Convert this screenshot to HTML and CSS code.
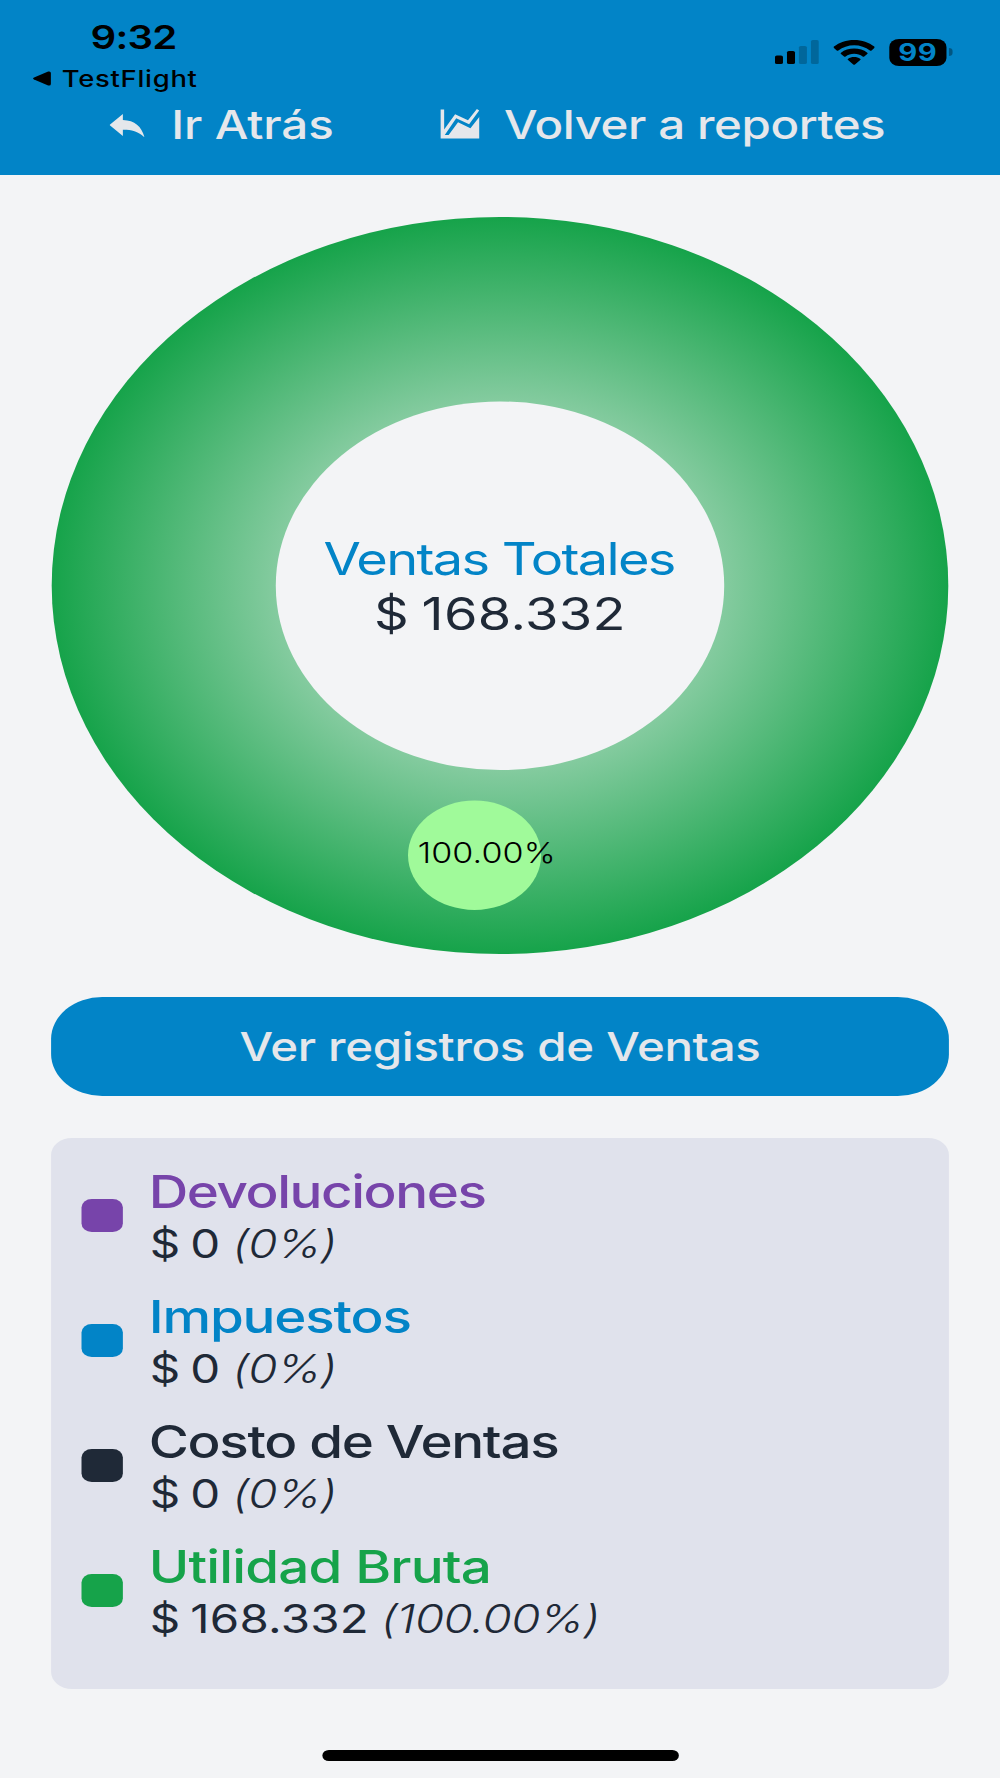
FILE: index.html
```html
<!DOCTYPE html>
<html lang="es">
<head>
    <meta charset="UTF-8">
    <meta name="viewport" content="width=device-width, initial-scale=1.0">
    <title>Ventas Totales</title>
    <link rel="stylesheet" href="styles.css">
</head>
<body>
    <div class="screen">
        <header class="header">
            <div class="status-bar">
                <div class="status-left">
                    <div class="time">9:32</div>
                    <div class="back-app">
                        <svg width="15" height="15" viewBox="0 0 15 15">
                            <path d="M1 6.5 L12.6 .6 Q14.8 0 14.8 2 V13 Q14.8 15 12.6 14.4 L1 8.5 Q-.6 7.5 1 6.5Z"/>
                        </svg>
                        <span>TestFlight</span>
                    </div>
                </div>
                <div class="status-right">
                    <svg width="36.2" height="24" viewBox="0 0 36.2 24">
                        <rect x="0" y="15.5" width="6.6" height="8.5" rx="1.6"/>
                        <rect x="9.9" y="11" width="6.6" height="13" rx="1.6"/>
                        <rect x="19.7" y="6" width="6.6" height="18" rx="1.6" opacity=".22"/>
                        <rect x="29.6" y="0" width="6.6" height="24" rx="1.6" opacity=".22"/>
                    </svg>
                    <svg class="wifi" width="34.2" height="25" viewBox="0 0 34.2 25">
                        <path d="M17.1 0 C23.6 0 29.3 2.5 33.7 6.6 Q34.4 7.3 33.7 8 L31.4 10.4 Q30.8 11 30.1 10.4 C26.5 7.2 22 5.2 17.1 5.2 S7.7 7.2 4.1 10.4 Q3.4 11 2.8 10.4 L.5 8 Q-.2 7.3 .5 6.6 C4.9 2.5 10.6 0 17.1 0Z"/>
                        <path d="M17.1 8.6 C21.2 8.6 25 10.1 27.9 12.7 Q28.6 13.4 27.9 14.1 L25.4 16.5 Q24.8 17.1 24.1 16.5 C22.2 14.8 19.8 13.8 17.1 13.8 S12 14.8 10.1 16.5 Q9.4 17.1 8.8 16.5 L6.3 14.1 Q5.6 13.4 6.3 12.7 C9.2 10.1 13 8.6 17.1 8.6Z"/>
                        <path d="M17.1 17.1 C19 17.1 20.8 17.8 22 18.8 Q22.8 19.4 22.1 20.1 L17.8 24.5 Q17.1 25.2 16.4 24.5 L12.1 20.1 Q11.4 19.4 12.2 18.8 C13.4 17.8 15.2 17.1 17.1 17.1Z"/>
                    </svg>
                    <div class="battery">99</div>
                    <div class="battery-tip"></div>
                </div>
            </div>
            <nav class="nav">
                <a class="nav-link">
                    <svg class="icon-back" width="28.8" height="23.4" viewBox="0 0 28.8 23.4">
                        <path d="M0 11 L11 0 V5.9 C21 6.2 26.4 12.5 28.8 23.4 C23.5 17.6 18 15.7 11 15.8 V22 Z"/>
                    </svg>
                    <span class="go-back">Ir Atrás</span>
                </a>
                <a class="nav-link">
                    <svg class="icon-chart" width="32.6" height="29.4" viewBox="0 0 32.6 29.4">
                        <path d="M0 .6 H3.1 V20.6 L12.1 5.2 L22.7 11.3 L30 0 L31.9 1.5 L23.6 15.3 L13 9.2 L3.6 26 H6.8 L14.5 13.2 L24.7 19.2 L32.3 7.5 V29.4 H0Z"/>
                    </svg>
                    <span class="reports">Volver a reportes</span>
                </a>
            </nav>
        </header>

        <main class="content">
            <svg class="chart" width="738" height="737" viewBox="0 0 738 737">
                <defs>
                    <radialGradient id="ring" gradientUnits="userSpaceOnUse" cx="369" cy="368.5" r="368.5">
                        <stop offset="50%" stop-color="#84cb9f"/>
                        <stop offset="100%" stop-color="#16a34a"/>
                    </radialGradient>
                </defs>
                <circle cx="369" cy="368.5" r="368.5" fill="url(#ring)"/>
                <circle class="hole" cx="369" cy="368.8" r="184.3"/>
                <text class="total-title" x="368.2" y="358">Ventas Totales</text>
                <text class="total-value" x="369" y="413">$ 168.332</text>
                <circle class="bubble" cx="348.1" cy="638.3" r="54.7"/>
                <text class="percent" x="301.3" y="645.8">100.00%</text>
            </svg>

            <button class="btn">Ver registros de Ventas</button>

            <section class="legend">
                <div class="legend-item returns">
                    <span class="swatch"></span>
                    <div>
                        <div class="legend-title">Devoluciones</div>
                        <div class="legend-value"><span>$ 0</span><em>(0%)</em></div>
                    </div>
                </div>
                <div class="legend-item taxes">
                    <span class="swatch"></span>
                    <div>
                        <div class="legend-title">Impuestos</div>
                        <div class="legend-value"><span>$ 0</span><em>(0%)</em></div>
                    </div>
                </div>
                <div class="legend-item cost">
                    <span class="swatch"></span>
                    <div>
                        <div class="legend-title">Costo de Ventas</div>
                        <div class="legend-value"><span>$ 0</span><em>(0%)</em></div>
                    </div>
                </div>
                <div class="legend-item profit">
                    <span class="swatch"></span>
                    <div>
                        <div class="legend-title">Utilidad Bruta</div>
                        <div class="legend-value"><span>$ 168.332</span><em>(100.00%)</em></div>
                    </div>
                </div>
            </section>
        </main>

        <div class="home-indicator"></div>
    </div>
</body>
</html>
```

FILE: styles.css
```css
:root {
    --blue: #0284c7;
    --green: #16a34a;
    --purple: #7744aa;
    --dark: #1f2937;
    --background: #f3f4f6;
    --light-text: #e5e7eb;
}

* {
    box-sizing: border-box;
}

body {
    margin: 0;
    overflow: hidden;
    background-color: var(--background);
    color: var(--dark);
    font-family: Inter, "Liberation Sans", sans-serif;
}

/* 822px wide phone layout, widened to fill the window */
.screen {
    width: 822px;
    height: 1778px;
    transform: scaleX(1.21655);
    transform-origin: 0 0;
}

svg {
    display: block;
    flex: none;
}

.header {
    height: 174.7px;
    background-color: var(--blue);
}

.status-bar {
    display: flex;
    justify-content: space-between;
    height: 93px;
    padding: 17px 38.7px 0 27px;
    color: #000;
}

.time {
    padding-left: 47.4px;
    font-size: 33px;
    font-weight: 600;
    line-height: 40px;
    letter-spacing: -0.6px;
}

.back-app {
    display: flex;
    align-items: center;
    gap: 8.8px;
    margin-top: 6px;
    font-size: 22.5px;
    font-weight: 500;
    line-height: 31px;
    letter-spacing: 0.6px;
}

.status-right {
    display: flex;
    align-items: center;
    height: 70px;
}

.wifi {
    margin: 0 12px 0 11.5px;
}

.battery {
    width: 46.9px;
    height: 27px;
    border-radius: 8px;
    background-color: #000;
    color: var(--blue);
    font-size: 24px;
    font-weight: 700;
    line-height: 27px;
    letter-spacing: 0.5px;
    text-align: center;
}

.battery-tip {
    width: 3px;
    height: 8px;
    margin-left: 2.4px;
    border-radius: 0 4px 4px 0;
    background-color: rgba(0, 0, 0, 0.35);
}

.nav {
    display: flex;
    gap: 87.4px;
    height: 62px;
    padding-left: 90.4px;
    color: var(--light-text);
    font-size: 39px;
    font-weight: 500;
    white-space: nowrap;
}

.nav-link {
    display: flex;
    align-items: center;
}

.nav-link svg {
    fill: var(--light-text);
}

.icon-back {
    margin: 3px 21.6px 0 0;
}

.go-back {
    letter-spacing: -0.1px;
}

.icon-chart {
    margin-right: 20px;
}

.reports {
    letter-spacing: -0.34px;
}

.content {
    padding: 42.3px 42px 0;
}

.hole {
    fill: var(--background);
}

.bubble {
    fill: #a0fa9a;
}

.total-title,
.total-value {
    font-size: 44.5px;
    text-anchor: middle;
}

.total-title {
    fill: var(--blue);
    letter-spacing: -1.4px;
}

.total-value {
    fill: var(--dark);
    letter-spacing: 0.3px;
    word-spacing: -2.6px;
}

.percent {
    font-size: 28px;
    font-weight: 300;
    letter-spacing: 0.1px;
}

.btn {
    display: block;
    width: 100%;
    height: 99px;
    margin: 43px 0 42px;
    padding: 1px 0 0;
    border: none;
    border-radius: 42px;
    background-color: var(--blue);
    color: var(--light-text);
    font-family: inherit;
    font-size: 39px;
    font-weight: 500;
    letter-spacing: -0.28px;
}

.legend {
    display: flex;
    flex-direction: column;
    gap: 21px;
    height: 551px;
    padding: 27.5px 25.4px;
    border-radius: 17px;
    background-color: #e0e2ec;
}

.legend-item {
    display: flex;
    align-items: center;
    gap: 21.2px;
}

.swatch {
    width: 33.7px;
    height: 33.3px;
    margin-bottom: 4px;
    border-radius: 8.4px;
    background-color: currentColor;
}

.legend-title {
    font-size: 45px;
    font-weight: 500;
    line-height: 54px;
}

.legend-value {
    display: flex;
    gap: 9.8px;
    margin-left: 0.8px;
    color: var(--dark);
    font-size: 39px;
    line-height: 50px;
    letter-spacing: 0.2px;
    word-spacing: -3px;
}

.legend-value em {
    font-weight: 300;
    letter-spacing: -0.5px;
}

.returns {
    color: var(--purple);
}

.returns .legend-title {
    letter-spacing: -1.17px;
}

.taxes {
    color: var(--blue);
}

.taxes .legend-title {
    letter-spacing: -0.97px;
}

.cost .legend-title {
    letter-spacing: -1.09px;
}

.profit {
    color: var(--green);
}

.profit .legend-title {
    letter-spacing: -0.68px;
}

.home-indicator {
    width: 293px;
    height: 10.6px;
    margin: 61.4px auto 0;
    border-radius: 5.3px;
    background-color: #000;
}
```
